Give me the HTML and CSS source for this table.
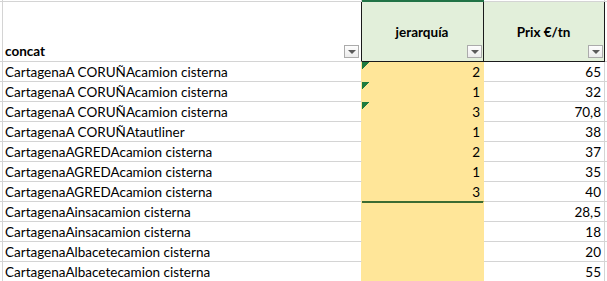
FILE: index.html
```html
<!DOCTYPE html>
<html>
<head>
<meta charset="utf-8">
<link rel="stylesheet" href="styles.css">
</head>
<body>
<div class="sheet">
  <div class="c top"></div><div class="c top"></div><div class="c top sel"></div><div class="c top"></div><div class="c top last"></div>

  <div class="c hd0"></div>
  <div class="c hd hd-concat"><span class="lbl">concat</span><span class="fb"></span></div>
  <div class="c hd hd-green hd-j"><span class="glbl">jerarquía</span><span class="fb"></span></div>
  <div class="c hd hd-green hd-p"><span class="glbl">Prix €/tn</span><span class="fb"></span></div>
  <div class="c last"></div>

  <div class="c"></div><div class="c txt">CartagenaA CORUÑAcamion cisterna</div><div class="c y num tri">2</div><div class="c num">65</div><div class="c last"></div>
  <div class="c"></div><div class="c txt">CartagenaA CORUÑAcamion cisterna</div><div class="c y num tri">1</div><div class="c num">32</div><div class="c last"></div>
  <div class="c"></div><div class="c txt">CartagenaA CORUÑAcamion cisterna</div><div class="c y num tri">3</div><div class="c num">70,8</div><div class="c last"></div>
  <div class="c"></div><div class="c txt">CartagenaA CORUÑAtautliner</div><div class="c y num">1</div><div class="c num">38</div><div class="c last"></div>
  <div class="c"></div><div class="c txt">CartagenaAGREDAcamion cisterna</div><div class="c y num">2</div><div class="c num">37</div><div class="c last"></div>
  <div class="c"></div><div class="c txt">CartagenaAGREDAcamion cisterna</div><div class="c y num">1</div><div class="c num">35</div><div class="c last"></div>
  <div class="c"></div><div class="c txt">CartagenaAGREDAcamion cisterna</div><div class="c y num endsel">3</div><div class="c num">40</div><div class="c last"></div>
  <div class="c"></div><div class="c txt">CartagenaAinsacamion cisterna</div><div class="c y num aftersel"></div><div class="c num">28,5</div><div class="c last"></div>
  <div class="c"></div><div class="c txt">CartagenaAinsacamion cisterna</div><div class="c y num"></div><div class="c num">18</div><div class="c last"></div>
  <div class="c"></div><div class="c txt">CartagenaAlbacetecamion cisterna</div><div class="c y num"></div><div class="c num">20</div><div class="c last"></div>
  <div class="c"></div><div class="c txt">CartagenaAlbacetecamion cisterna</div><div class="c y num"></div><div class="c num">55</div><div class="c last"></div>
</div>
</body>
</html>
```
FILE: styles.css
```css
html, body {
  margin: 0;
  padding: 0;
  background: #ffffff;
}
body {
  font-family: Lato, "Open Sans", "Liberation Sans", sans-serif;
  font-size: 13.5px;
  color: #000000;
  overflow: hidden;
}
.sheet {
  display: grid;
  grid-template-columns: 3px 359px 122px 121px 1fr;
  grid-template-rows: 2px 60px repeat(11, 20px);
  width: 607px;
}
.c {
  box-sizing: border-box;
  border-right: 1px solid #d4d4d4;
  border-bottom: 1px solid #d4d4d4;
  background: #ffffff;
  line-height: 21px;
  white-space: nowrap;
  overflow: hidden;
}
.c.last {
  border-right: none;
}
.top.sel {
  background: #217346;
  border-bottom-color: #217346;
  border-right-color: #217346;
}
.hd-concat {
  display: flex;
  align-items: flex-end;
  justify-content: space-between;
  padding: 0 2px 3px 2px;
  border-right-color: #1a1a1a;
}
.hd-concat .lbl {
  font-weight: 700;
  line-height: 16px;
  margin-bottom: -1px;
}
.hd-green {
  display: grid;
  background: #e2efda;
  border-right-color: #1a1a1a;
  border-bottom-color: #1a1a1a;
  padding: 0 1px 3px 0;
}
.hd-green .glbl {
  grid-area: 1 / 1;
  align-self: center;
  justify-self: center;
  font-weight: 700;
  line-height: 18px;
  margin-top: 4px;
}
.hd-green .fb {
  grid-area: 1 / 1;
  align-self: end;
  justify-self: end;
}
.fb {
  display: flex;
  align-items: center;
  justify-content: center;
  box-sizing: border-box;
  width: 15px;
  height: 13px;
  border: 1px solid #ababab;
  background: linear-gradient(#fdfdfd, #ececec);
}
.fb::after {
  content: "";
  width: 0;
  height: 0;
  border-left: 4px solid transparent;
  border-right: 4px solid transparent;
  border-top: 4px solid #5a5a5a;
  margin-top: 1px;
}
.txt {
  padding-left: 2px;
  border-right-color: #ffe699;
}
.num {
  text-align: right;
  padding-right: 3px;
}
.y {
  background: #ffe699;
  border-right-color: #ffe699;
  border-bottom-color: #ffe699;
}
.tri {
  background: linear-gradient(135deg, #1f7a3f 50%, transparent 50%) 0 0 / 8px 8px no-repeat, #ffe699;
}
.endsel {
  border-bottom-color: #3c6b32;
}
.aftersel {
  box-shadow: inset 0 1px 0 #3c6b32;
}
```
